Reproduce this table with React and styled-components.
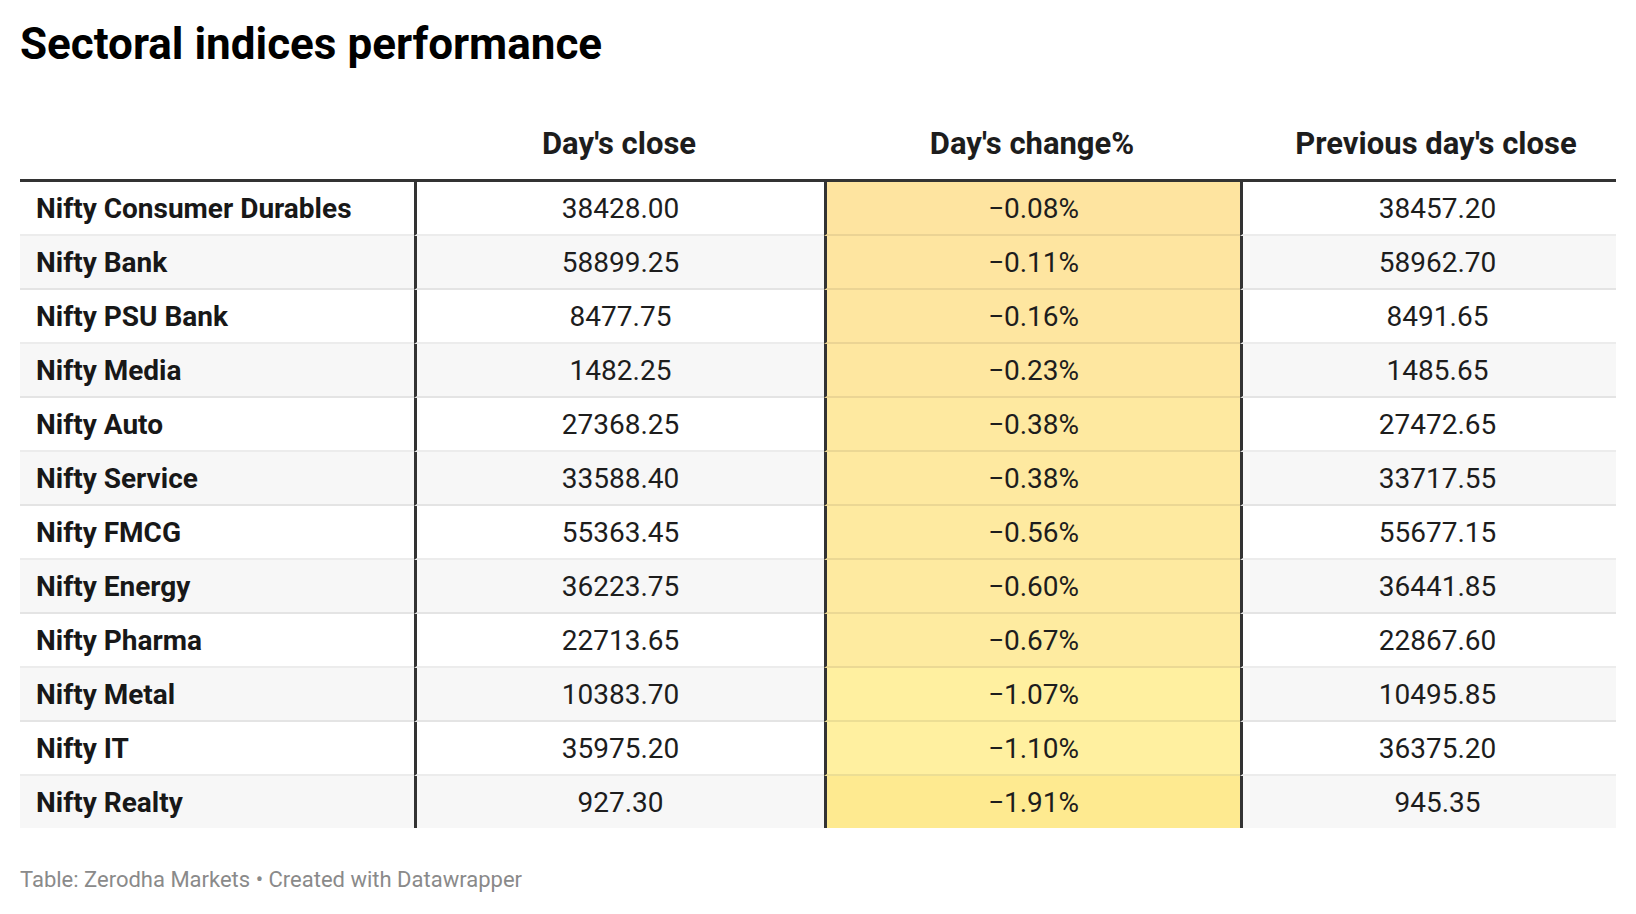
import styled, { createGlobalStyle } from "styled-components";

const GlobalStyle = createGlobalStyle`
  html, body {
    margin: 0;
    padding: 0;
    background: #ffffff;
  }
  body {
    font-family: Roboto, "Liberation Sans", Arial, sans-serif;
    color: #1d1d1d;
  }
`;

const rows = [
  { name: "Nifty Consumer Durables", close: "38428.00", change: "−0.08%", prev: "38457.20", bg: "#fee4a0" },
  { name: "Nifty Bank", close: "58899.25", change: "−0.11%", prev: "58962.70", bg: "#fee5a0" },
  { name: "Nifty PSU Bank", close: "8477.75", change: "−0.16%", prev: "8491.65", bg: "#fee6a0" },
  { name: "Nifty Media", close: "1482.25", change: "−0.23%", prev: "1485.65", bg: "#fee7a0" },
  { name: "Nifty Auto", close: "27368.25", change: "−0.38%", prev: "27472.65", bg: "#fee9a0" },
  { name: "Nifty Service", close: "33588.40", change: "−0.38%", prev: "33717.55", bg: "#fee9a0" },
  { name: "Nifty FMCG", close: "55363.45", change: "−0.56%", prev: "55677.15", bg: "#feeaa0" },
  { name: "Nifty Energy", close: "36223.75", change: "−0.60%", prev: "36441.85", bg: "#feeaa0" },
  { name: "Nifty Pharma", close: "22713.65", change: "−0.67%", prev: "22867.60", bg: "#feeba0" },
  { name: "Nifty Metal", close: "10383.70", change: "−1.07%", prev: "10495.85", bg: "#fff0a0" },
  { name: "Nifty IT", close: "35975.20", change: "−1.10%", prev: "36375.20", bg: "#fff0a0" },
  { name: "Nifty Realty", close: "927.30", change: "−1.91%", prev: "945.35", bg: "#feea90" },
];

const Page = styled.div`
  padding: 18px 20px 0 20px;
`;

const Title = styled.h1`
  margin: 0;
  font-size: 44px;
  line-height: 1.2;
  font-weight: 700;
  color: #000;
`;

const Table = styled.div`
  display: grid;
  grid-template-columns: 394px 410px 416px 376px;
  width: 1596px;
`;

const HeadCell = styled.div`
  height: 111px;
  box-sizing: border-box;
  display: flex;
  align-items: flex-end;
  justify-content: center;
  padding-bottom: 17px;
  padding-left: ${(p) => (p.$shift ? "16px" : "0")};
  font-size: 31px;
  line-height: 1.2;
  font-weight: 700;
  color: #1d1d1d;
  border-bottom: 3px solid #333;
`;

const Cell = styled.div`
  height: ${(p) => (p.$last ? "52px" : "54px")};
  box-sizing: border-box;
  display: flex;
  align-items: center;
  justify-content: ${(p) => (p.$label ? "flex-start" : "center")};
  padding-left: ${(p) => (p.$label || p.$shift ? "16px" : "0")};
  padding-top: 1px;
  font-size: 28px;
  font-weight: ${(p) => (p.$label ? 700 : 400)};
  color: ${(p) => (p.$label ? "#181818" : "#1d1d1d")};
  background: ${(p) => p.$bg || (p.$stripe ? "#f7f7f7" : "#ffffff")};
  border-bottom: ${(p) => (p.$last ? "none" : "2px solid rgba(0, 0, 0, 0.075)")};
  border-left: ${(p) => (p.$divider ? "3px solid #333" : "none")};
`;

const Footer = styled.div`
  margin-top: 40px;
  font-size: 22px;
  line-height: 24px;
  color: #8a8a8a;
`;

export default function App() {
  return (
    <Page>
      <GlobalStyle />
      <Title>Sectoral indices performance</Title>
      <Table>
        <HeadCell />
        <HeadCell>Day's close</HeadCell>
        <HeadCell>Day's change%</HeadCell>
        <HeadCell $shift>Previous day's close</HeadCell>
        {rows.map((r, i) => {
          const stripe = i % 2 === 1;
          const last = i === rows.length - 1;
          return [
            <Cell key={r.name + "n"} $label $stripe={stripe} $last={last}>{r.name}</Cell>,
            <Cell key={r.name + "c"} $divider $stripe={stripe} $last={last}>{r.close}</Cell>,
            <Cell key={r.name + "p"} $divider $bg={r.bg} $last={last}>{r.change}</Cell>,
            <Cell key={r.name + "v"} $divider $shift $stripe={stripe} $last={last}>{r.prev}</Cell>,
          ];
        })}
      </Table>
      <Footer>Table: Zerodha Markets • Created with Datawrapper</Footer>
    </Page>
  );
}
